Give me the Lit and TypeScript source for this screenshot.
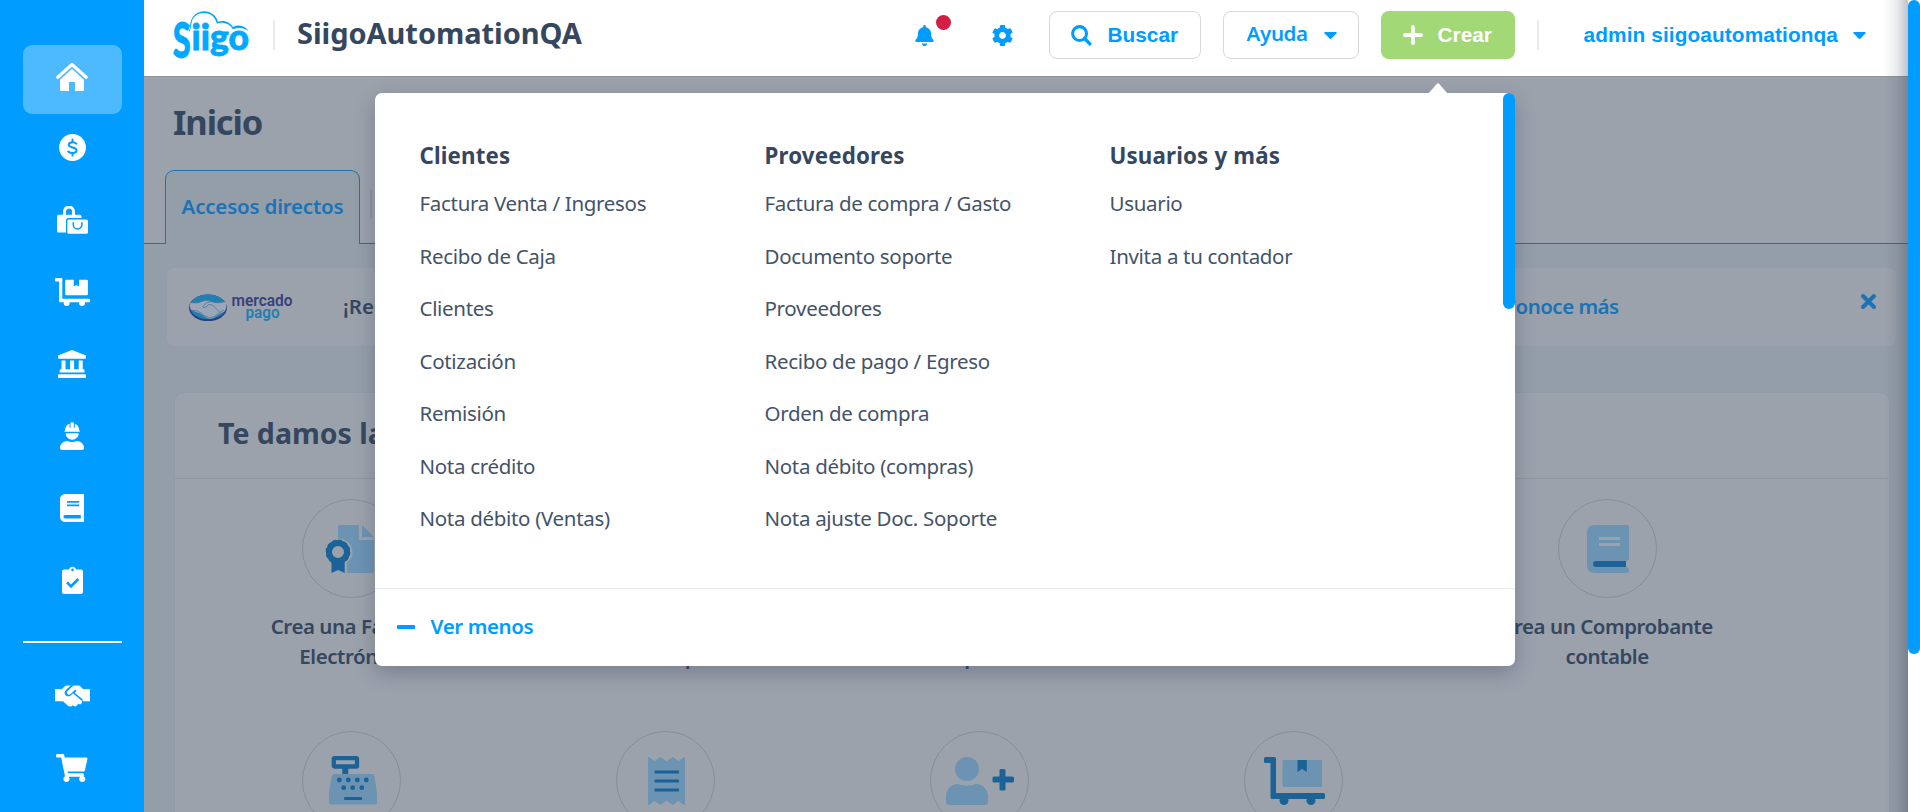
import { LitElement, html, svg, css, nothing, TemplateResult } from "lit";
import { customElement } from "lit/decorators.js";
import { classMap } from "lit/directives/class-map.js";

const BOOK_LINES = "M134 128h212q6 0 6 6v20q0 6-6 6H134q-6 0-6-6v-20q0-6 6-6zM134 192h212q6 0 6 6v20q0 6-6 6H134q-6 0-6-6v-20q0-6 6-6z";

const icons: Record<string, TemplateResult> = {
  home: html`<svg width="32" height="28" viewBox="0 0 32 28" fill="#fff">
    <path d="M16 5.800 28 16.800v9.700a1.500 1.500 0 0 1-1.500 1.500H19v-9h-6v9H5.500A1.500 1.500 0 0 1 4 26.500V16.800z" />
    <path d="M1.800 14.600 16 1.800l14.200 12.800" fill="none" stroke="#4db9ff" stroke-width="5" />
    <path d="M1.800 14.200 16 1.500l14.200 12.700" fill="none" stroke="#fff" stroke-width="3.300" stroke-linecap="round" stroke-linejoin="round" />
  </svg>`,
  dollar: html`<svg width="27" height="28" viewBox="0 0 27 28">
    <circle cx="13.500" cy="13.500" r="13.400" fill="#fff" />
    <path d="M17.300 9.600C16.300 8.500 15 8.200 13.500 8.200c-2.200 0-3.700 1-3.700 2.600 0 3.800 7.700 1.700 7.700 5.500 0 1.800-1.600 2.800-3.900 2.800-1.700 0-3.300-.5-4.300-1.600M13.500 5.500v2.600M13.500 19v2.500" fill="none" stroke="#009cff" stroke-width="2" stroke-linecap="round" />
  </svg>`,
  bags: html`<svg width="31" height="28" viewBox="0 0 31 28">
    <path d="M7.500 10V5.500a4.500 4.500 0 0 1 9 0V10" fill="none" stroke="#fff" stroke-width="3" />
    <path d="M1.500 8.700H23q1.500 0 1.500 1.500V12H11.500Q9 12 9 14.500V26.500H1.500Q0 26.500 0 25V10.200Q0 8.700 1.500 8.700z" fill="#fff" />
    <rect x="10.300" y="13.500" width="20.700" height="14.300" rx="1.500" fill="#fff" />
    <path d="M16.300 16.800v2a4.300 4.300 0 0 0 8.600 0v-2" fill="none" stroke="#009cff" stroke-width="1.500" stroke-linecap="round" />
  </svg>`,
  dolly: html`<svg width="35" height="28" viewBox="0 0 35 28" fill="#fff">
    <path d="M1 0h6.300v20.700H34q1 0 1 1v1.500q0 1-1 1H5q-1 0-1-1V3.500H1q-1 0-1-1V1q0-1 1-1z" />
    <path d="M11.200 1.800h7.600v6.700l2.600-1.500 2.600 1.500V1.800h7.700q1.200 0 1.200 1.200v13q0 1.200-1.200 1.200H11.200q-1 0-1-1.200V3q0-1.200 1-1.200z" />
    <circle cx="11.700" cy="25" r="3" /><circle cx="27" cy="25" r="3" />
  </svg>`,
  bank: html`<svg width="28" height="28" viewBox="0 0 28 28" fill="#fff">
    <path d="M14 0l13.400 5.200q.6.300.6 1V8q0 .8-.8.800H.8Q0 8.800 0 8V6.200q0-.7.600-1z" />
    <path d="M3.500 10.500h4v8.700h4.600v-8.700h4v8.700h4.600v-8.700h4v8.700h.8q1 0 1 1V22.500H1.700v-2.300q0-1 1-1h.8z" />
    <rect y="24.300" width="28" height="3.700" rx=".9" />
  </svg>`,
  worker: html`<svg width="24" height="28" viewBox="0 0 24 28" fill="#fff">
    <path d="M5 8.700Q5 3.500 9.500 1.700v4l1 .1V.6Q12 0 13.800.6v5.200l1-.1v-4Q19.300 3.500 19.300 8.700h.5V9.800H4.400V8.700z" />
    <path d="M5.600 11.200h13.200a6.600 6.600 0 0 1-13.200 0z" />
    <path d="M7.300 19c3 1.300 6.500 1.300 9.500 0 4.500.2 7.200 3.300 7.200 7q0 2-2 2H2q-2 0-2-2c0-3.700 2.800-6.800 7.300-7z" />
  </svg>`,
  book: html`<svg width="24.500" height="28" viewBox="0 0 448 512" fill="#fff">
    <path fill-rule="evenodd" d="M448 360V24c0-13.300-10.700-24-24-24H96C43 0 0 43 0 96v320c0 53 43 96 96 96h328c13.300 0 24-10.700 24-24v-16c0-7.500-3.500-14.300-8.900-18.700-4.200-15.400-4.200-59.300 0-74.700 5.400-4.300 8.900-11.100 8.900-18.600zM381.400 448H96c-17.700 0-32-14.300-32-32 0-17.600 14.400-32 32-32h285.400c-1.900 17.100-1.900 46.900 0 64z${BOOK_LINES}" />
  </svg>`,
  clipboard: html`<svg width="21" height="28" viewBox="0 0 21 28">
    <path d="M2 3.500h5a3.600 3.600 0 0 1 7 0h5q2 0 2 2V26q0 2-2 2H2q-2 0-2-2V5.500q0-2 2-2z" fill="#fff" />
    <circle cx="10.500" cy="3.900" r="1.300" fill="#009cff" />
    <path d="M5 16.300l4 4 7.300-7.300" fill="none" stroke="#009cff" stroke-width="2.600" />
  </svg>`,
  handshake: html`<svg width="35" height="28" viewBox="0 0 640 512" fill="#fff">
    <path d="M434.700 64h-85.900c-8 0-15.700 3-21.600 8.400l-98.300 90c-.1.100-.2.300-.3.400-16.600 15.600-16.300 40.500-2.100 56 12.700 13.900 39.400 17.600 56.100 2.700.1-.1.300-.1.400-.2l79.900-73.200c6.500-5.900 16.700-5.500 22.600 1 6 6.500 5.500 16.600-1 22.600l-26.100 23.900L504 313.800c2.900 2.400 5.500 5 7.900 7.700V128l-54.600-54.600c-5.900-6-14.100-9.400-22.600-9.400zM544 128.200v223.900h96V128.200h-96zM0 352h96V128.200H0V352zm128-224v223.900h18.300l90.500 81.900c27.400 22.300 67.700 18.100 90-9.300l.2-.2 17.900 15.500c15.900 13 39.400 10.500 52.300-5.400l31.400-38.600 5.400 4.400c13.700 11.100 33.900 9.100 45-4.700l9.500-11.700c11.200-13.800 9.100-33.900-4.600-45.100L327.400 207.600l-41.100 37.600c-26.900 24.700-68.600 22.900-93.300-4-24.700-27-22.800-68.700 4.100-93.400L288.900 64h-83.300c-8.500 0-16.600 3.400-22.600 9.400L128 128z" />
    <path d="M90 128h45v224H90zM505 128h45v224h-45z" />
  </svg>`,
  cart: html`<svg width="31.500" height="28" viewBox="0 0 576 512" fill="#fff">
    <path d="M528.120 301.319l47.273-208C578.806 78.301 567.391 64 551.990 64H159.208l-9.166-44.810C147.758 8.021 137.930 0 126.529 0H24C10.745 0 0 10.745 0 24v16c0 13.255 10.745 24 24 24h69.883l70.248 343.435C147.325 417.100 136 435.222 136 456c0 30.928 25.072 56 56 56s56-25.072 56-56c0-15.674-6.447-29.835-16.824-40h209.647C430.447 426.165 424 440.326 424 456c0 30.928 25.072 56 56 56s56-25.072 56-56c0-22.172-12.888-41.332-31.579-50.405l5.517-24.276c3.413-15.018-8.002-29.319-23.403-29.319H218.117l-6.545-32h293.145c11.206 0 20.920-7.754 23.403-18.681z" />
  </svg>`,
};

const L = "#6c93b2";
const D = "#1b6397";
const P = "#9ba2ac";

const tileIcons: Record<string, TemplateResult> = {
  certificate: html`<svg class="shift-left" width="48" height="48" viewBox="0 0 48 48">
    <path d="M13.500 0H32.800V13.500q0 1.500 1.500 1.500H48V46.500q0 1.500-1.500 1.500H21V37.500Q27 33 26.500 27 26 17 17 14.500L12 13.500V1.500Q12 0 13.500 0z" fill="${L}" />
    <path d="M36 0l12 12H36z" fill="${L}" />
    <path d="M5.500 34h13.200v14l-6.600-3-6.600 3z" fill="${D}" />
    <circle cx="12" cy="27" r="9" fill="none" stroke="${D}" stroke-width="6" />
    <circle cx="12" cy="27" r="11.500" fill="none" stroke="${D}" stroke-width="1.800" stroke-dasharray="3.500 2.520" />
  </svg>`,
  register: html`<svg width="48" height="49" viewBox="0 0 48 49">
    <path d="M13.300 10h6v10h-6z" fill="${D}" />
    <rect x="4.800" y="2.200" width="23.200" height="8.300" rx=".6" fill="none" stroke="${D}" stroke-width="4.300" stroke-linejoin="round" />
    <path d="M5.200 18H43q2 0 2.300 2L48 36.500V46.500q0 2-2 2H2q-2 0-2-2V36.500L2.900 20q.3-2 2.300-2z" fill="${L}" />
    <g fill="${D}">${[[10.300, 24], [19.300, 24], [28.300, 24], [37.300, 24], [14.700, 31.700], [23.700, 31.700], [32.800, 31.700]].map(([x, y]) => svg`<circle cx=${x} cy=${y} r="2.400" />`)}
    <rect x="15" y="41" width="18" height="3" rx=".8" /></g>
  </svg>`,
  receipt: html`<svg width="37" height="48" viewBox="0 0 37 48">
    <path d="M0 1q0-1.400 1.500-.8L6.500 4.300 12 0l6.500 4.300L25 0l5.500 4.300L35.500.2Q37-.4 37 1V47q0 1.400-1.500.8L30.500 43.700 25 48l-6.500-4.300L12 48l-5.500-4.300L1.500 47.800Q0 48.400 0 47z" fill="${L}" />
    <g fill="${D}"><rect x="6.500" y="13.500" width="24.500" height="3" rx=".7" /><rect x="6.500" y="22.500" width="24.500" height="3" rx=".7" /><rect x="6.500" y="31.500" width="24.500" height="3" rx=".7" /></g>
  </svg>`,
  person: html`<svg width="68" height="48" viewBox="0 0 68 48">
    <circle cx="21" cy="12" r="12" fill="${L}" />
    <path d="M12.500 27c5.500 2.200 11.500 2.200 17 0C37 27 42 32.500 42 39.500V45q0 3-3 3H3q-3 0-3-3v-5.500C0 32.500 5 27 12.500 27z" fill="${L}" />
    <path d="M55 12h3q1.500 0 1.500 1.500v6h7q1.500 0 1.500 1.500v3q0 1.500-1.500 1.500h-7v6.500q0 1.500-1.500 1.500h-3q-1.500 0-1.500-1.500V25.500H48q-1.500 0-1.500-1.500v-3q0-1.500 1.500-1.500h5.500v-6q0-1.500 1.500-1.500z" fill="${D}" />
  </svg>`,
  dolly: html`<svg width="61" height="48" viewBox="0 0 61 48">
    <path d="M1.500 0h9Q12 0 12 1.500V36h47.500q1.500 0 1.500 1.500v3q0 1.500-1.500 1.500H8q-1.500 0-1.500-1.500V6h-5Q0 6 0 4.500v-3Q0 0 1.500 0z" fill="${D}" />
    <circle cx="20" cy="43.500" r="4.500" fill="${D}" /><circle cx="47" cy="43.500" r="4.500" fill="${D}" />
    <rect x="18.500" y="3" width="39.500" height="27" rx="1.500" fill="${L}" />
    <path d="M33.500 3h9.300v12l-4.650-3-4.650 3z" fill="${D}" />
  </svg>`,
  ledger: html`<svg width="42" height="48" viewBox="0 0 42 48">
    <path d="M8 0h31.500Q42 0 42 2.500V33q0 2.500-3 3v6q3 .5 3 3 0 3-2.500 3H8q-8 0-8-8V8Q0 0 8 0z" fill="${L}" />
    <path d="M12 12h21v3H12zM12 18h21v3H12z" fill="${P}" />
    <path d="M9 36h30v6H9a3 3 0 0 1 0-6z" fill="${D}" />
  </svg>`,
};

const nav = ["home", "dollar", "bags", "dolly", "bank", "worker", "book", "clipboard"];
const navExtra = ["handshake", "cart"];

const menu = [
  { title: "Clientes", items: ["Factura Venta / Ingresos", "Recibo de Caja", "Clientes", "Cotización", "Remisión", "Nota crédito", "Nota débito (Ventas)"] },
  { title: "Proveedores", items: ["Factura de compra / Gasto", "Documento soporte", "Proveedores", "Recibo de pago / Egreso", "Orden de compra", "Nota débito (compras)", "Nota ajuste Doc. Soporte"] },
  { title: "Usuarios y más", items: ["Usuario", "Invita a tu contador"] },
];

const tiles: { icon: string; lines: string[] }[] = [
  { icon: "certificate", lines: ["Crea una Factura", "Electrónica"] },
  { icon: "receipt", lines: ["Crea una Factura", "de compra"] },
  { icon: "receipt", lines: ["Crea un Documento", "soporte"] },
  { icon: "receipt", lines: ["Crea una", "Cotización"] },
  { icon: "ledger", lines: ["Crea un Comprobante", "contable"] },
  { icon: "register", lines: [] },
  { icon: "receipt", lines: [] },
  { icon: "person", lines: [] },
  { icon: "dolly", lines: [] },
];

@customElement("side-nav")
class SideNav extends LitElement {
  static styles = css`
    :host { display: flex; flex-direction: column; align-items: center; box-sizing: border-box; width: 144px; height: 812px; padding-top: 45px; background: #009cff; flex: none; overflow: hidden; }
    .item { display: flex; align-items: center; justify-content: center; box-sizing: border-box; width: 99px; height: 72px; flex: none; }
    .active { height: 69px; margin-bottom: -2px; padding-bottom: 5px; border-radius: 9px; background: #4db9ff; }
    .rule { width: 99px; height: 2px; margin: 25px 0 17px; background: #fff; flex: none; }
    svg { display: block; }
  `;
  render() {
    return html`
      ${nav.map((n, i) => html`<div class=${classMap({ item: true, active: i === 0 })}>${icons[n]}</div>`)}
      <div class="rule"></div>
      ${navExtra.map((n) => html`<div class="item">${icons[n]}</div>`)}
    `;
  }
}

@customElement("top-bar")
class TopBar extends LitElement {
  static styles = css`
    :host { display: flex; align-items: center; box-sizing: border-box; height: 76px; padding: 0 42px 6px 28px; background: #fff; color: #009cff; font: 600 20.5px/30px "Noto Sans", sans-serif; flex: none; }
    svg { display: block; flex: none; overflow: visible; }
    .rule { width: 2px; height: 30px; background: #e9eaec; }
    .company { margin: 0 auto 0 22px; padding-bottom: 5px; color: #35475e; font-size: 29px; font-weight: 700; line-height: 40px; letter-spacing: -0.050px; }
    .logo { margin: 0 24px 0 0; }
    .bell { position: relative; width: 20px; margin-right: 57px; }
    .dot { position: absolute; left: 21px; top: -10px; width: 15px; height: 15px; border-radius: 50%; background: #d41f43; }
    .btn { display: flex; align-items: center; box-sizing: border-box; height: 48px; border: 1px solid #d6d8dc; border-radius: 8px; }
    .arial { font-family: "Liberation Sans", Arial, sans-serif; font-weight: 700; font-size: 20.800px; letter-spacing: 0; }
    .search { width: 152px; margin: 0 22px 0 36px; padding-left: 21px; gap: 16px; }
    .help { width: 136px; margin-right: 22px; padding-left: 23px; gap: 16px; letter-spacing: -0.350px; }
    .help span { padding-bottom: 4px; }
    .create { width: 134px; margin-right: 22px; padding-left: 22px; gap: 15px; border: 0; background: #a2d876; color: #fff; }
    .user { display: flex; align-items: center; gap: 15px; margin-left: 45px; }
    .user span { letter-spacing: 0.110px; }
  `;
  render() {
    const caret = html`<svg width="13" height="7" viewBox="0 0 13 7"><path d="M1 0h11q1.200.3.500 1.300L7.500 6.500q-1 .9-2 0L.5 1.300Q-.2.300 1 0z" fill="#009cff" /></svg>`;
    return html`
      <svg class="logo" width="77" height="52" viewBox="172 9 77 52">
        <path d="M186.500 24l3 6q.3-5 1.200-8.500C193 15 198 11.300 204 11.300c7 0 12.300 4.200 14 10.400 5-1.500 11-.7 15 5.300 6-3 12.500-1 16 4.500-4-3.300-9.500-4.500-16-2.300-4-6-9.500-7.500-16.200-5.700-1.500-6.500-6.500-10.500-12.800-10.500-6 0-10.500 3.500-12 8-1 3.500-1 7-2.500 11z" fill="#00a9ff" />
        <text x="172.800" y="58.200" font-family="Lato, sans-serif" font-weight="900" font-size="49" fill="#00a9ff" stroke="#00a9ff" stroke-width=".8" textLength="18" lengthAdjust="spacingAndGlyphs">S</text>
        <text x="191.500" y="50.300" font-family="Lato, sans-serif" font-weight="900" font-size="35.500" fill="#00a9ff" stroke="#00a9ff" stroke-width=".8" textLength="57.500" lengthAdjust="spacingAndGlyphs">iigo</text>
      </svg>
      <div class="rule"></div>
      <div class="company">SiigoAutomationQA</div>
      <div class="bell">
        <svg width="19" height="21" viewBox="0 0 448 512"><path fill="#009cff" d="M224 512c35.320 0 63.970-28.650 63.970-64H160.030c0 35.350 28.650 64 63.970 64zm215.390-149.710c-19.320-20.760-55.470-51.990-55.470-154.290 0-77.700-54.480-139.900-127.940-155.160V32c0-17.670-14.320-32-31.980-32s-31.980 14.330-31.980 32v20.840C118.560 68.100 64.080 130.300 64.080 208c0 102.300-36.150 133.530-55.470 154.290-6 6.450-8.660 14.160-8.610 21.710.11 16.400 12.980 32 32.100 32h383.800c19.120 0 32-15.600 32.100-32 .05-7.550-2.610-15.270-8.610-21.710z" /></svg>
        <div class="dot"></div>
      </div>
      <svg width="21" height="21" viewBox="8 8 496 496"><path fill="#009cff" d="M487.400 315.700l-42.600-24.600c4.300-23.200 4.300-47 0-70.200l42.600-24.600c4.900-2.800 7.100-8.600 5.500-14-11.100-35.600-30-67.800-54.700-94.600-3.800-4.100-10-5.100-14.800-2.300L380.800 110c-17.900-15.400-38.500-27.300-60.800-35.100V25.800c0-5.600-3.900-10.500-9.400-11.700-36.700-8.200-74.300-7.800-109.200 0-5.500 1.200-9.400 6.100-9.400 11.700V75c-22.200 7.900-42.800 19.800-60.800 35.100L88.700 85.500c-4.900-2.800-11-1.900-14.800 2.300-24.700 26.700-43.600 58.900-54.700 94.600-1.700 5.400.6 11.200 5.500 14L67.300 221c-4.300 23.200-4.300 47 0 70.200l-42.600 24.600c-4.900 2.800-7.100 8.600-5.500 14 11.100 35.600 30 67.800 54.700 94.600 3.800 4.100 10 5.100 14.800 2.300l42.600-24.600c17.900 15.400 38.500 27.300 60.800 35.100v49.200c0 5.600 3.900 10.500 9.400 11.700 36.700 8.200 74.300 7.800 109.200 0 5.500-1.200 9.400-6.100 9.400-11.700v-49.200c22.200-7.900 42.800-19.800 60.800-35.100l42.600 24.600c4.900 2.800 11 1.900 14.800-2.300 24.700-26.700 43.600-58.900 54.700-94.600 1.500-5.500-.7-11.300-5.600-14.100zM256 336c-44.100 0-80-35.900-80-80s35.900-80 80-80 80 35.900 80 80-35.900 80-80 80z" /></svg>
      <div class="btn arial search">
        <svg width="21" height="21" viewBox="0 0 22 22"><circle cx="9" cy="9" r="7.300" fill="none" stroke="#009cff" stroke-width="3.200" /><path d="M14.200 14.200l5.600 5.600" stroke="#009cff" stroke-width="3.600" stroke-linecap="round" /></svg>
        <span>Buscar</span>
      </div>
      <div class="btn help"><span>Ayuda</span>${caret}</div>
      <div class="btn arial create">
        <svg width="20" height="20" viewBox="0 0 20 20"><path d="M10 1.900v16.200M1.900 10h16.200" stroke="#fff" stroke-width="3.800" stroke-linecap="round" /></svg>
        <span>Crear</span>
      </div>
      <div class="rule"></div>
      <div class="user arial"><span>admin siigoautomationqa</span>${caret}</div>
    `;
  }
}

@customElement("create-menu")
class CreateMenu extends LitElement {
  static styles = css`
    :host { display: block; position: absolute; left: 231px; top: 93px; width: 1140px; height: 573px; border-radius: 7px; background: #fff; box-shadow: 0 7px 20px rgba(40, 50, 75, 0.3); color: #435369; font: 400 20.500px/30px "Noto Sans", sans-serif; letter-spacing: -0.310px; }
    .arrow { position: absolute; left: 1053px; top: -10px; display: block; }
    .bar { position: absolute; right: 0; top: 0; width: 12px; height: 216px; border-radius: 6px; background: #009cff; }
    .cols { display: grid; grid-template-columns: repeat(3, 345px); box-sizing: border-box; height: 496px; padding: 48px 0 0 44.500px; border-bottom: 1px solid #e8eaed; }
    .title { height: 47px; color: #35475e; font-size: 22.300px; font-weight: 700; letter-spacing: 0.160px; }
    .entry { height: 52.500px; }
    .footer { display: flex; align-items: center; box-sizing: border-box; height: 76px; padding: 0 0 2px 22px; gap: 15.500px; color: #009cff; font-weight: 600; letter-spacing: -0.400px; }
    .minus { width: 18px; height: 4px; margin-top: 1px; border-radius: 1px; background: #009cff; }
  `;
  render() {
    return html`
      <svg class="arrow" width="20" height="11" viewBox="0 0 20 11"><path d="M0 11 L9 .8q1-1 2 0L20 11z" fill="#fff" /></svg>
      <div class="bar"></div>
      <div class="cols">
        ${menu.map((c) => html`<div>
          <div class="title">${c.title}</div>
          ${c.items.map((t) => html`<div class="entry">${t}</div>`)}
        </div>`)}
      </div>
      <div class="footer"><div class="minus"></div><span>Ver menos</span></div>
    `;
  }
}

@customElement("app-root")
class AppRoot extends LitElement {
  static styles = css`
    :host { display: flex; width: 1920px; height: 812px; overflow: hidden; background: #fff; font: 600 20.500px/30px "Noto Sans", sans-serif; color: #35475e; }
    .main { position: relative; display: flex; flex-direction: column; width: 1764px; height: 812px; overflow: hidden; background: #949ea8; }
    .scroll { width: 12px; flex: none; }
    .thumb { height: 654px; border-radius: 6px; background: #009cff; }
    .edge { position: absolute; right: 0; top: 0; width: 24px; height: 812px; background: linear-gradient(to left, rgba(60, 68, 85, 0.32), rgba(60, 68, 85, 0.110) 45%, rgba(60, 68, 85, 0)); }
    .head { display: flex; flex-direction: column; height: 168px; flex: none; background: #9ba2ac; box-shadow: inset 0 1px 0 #8e959f; }
    .h1 { height: 94px; box-sizing: border-box; padding: 22px 0 0 29px; font-size: 34.500px; line-height: 48px; font-weight: 700; letter-spacing: -1.100px; }
    .tabs { display: flex; height: 74px; }
    .lead { width: 21px; border-bottom: 1px solid #1b72b4; box-sizing: border-box; }
    .tab { width: 195px; height: 74px; box-sizing: border-box; border: 1px solid #1b72b4; border-bottom: 0; border-radius: 9px 9px 0 0; background: #949ea8; color: #1b72b4; text-align: center; line-height: 71px; letter-spacing: -0.200px; }
    .rest { flex: 1; border-bottom: 1px solid #1b72b4; padding: 19px 0 0 10px; }
    .sep { width: 2px; height: 30px; background: #8f969f; }
    .banner { display: flex; align-items: center; box-sizing: border-box; width: 1729px; height: 78px; margin: 24px 0 0 23px; padding: 0 20px 0 22px; border-radius: 7px; background: #9ba2ac; flex: none; }
    .msg { margin: 0 0 3px 50px; flex: 1; letter-spacing: 0; }
    .more { width: 358px; color: #1b72b4; letter-spacing: -0.520px; padding-bottom: 3px; }
    .close { margin-top: -12px; }
    .card { width: 1716px; height: 600px; margin: 46px 0 0 30px; box-sizing: border-box; border: 1px solid #929aa4; border-radius: 10px; background: #9ba2ac; flex: none; }
    .cardtitle { height: 86px; box-sizing: border-box; border-bottom: 1px solid #8f969f; padding: 19px 0 0 43px; font-size: 28.500px; line-height: 42px; font-weight: 700; }
    .grid { display: grid; grid-template-columns: repeat(5, 313.800px); padding: 20px 0 0 20px; row-gap: 32px; }
    .tile { display: flex; flex-direction: column; align-items: center; height: 200px; letter-spacing: -0.450px; }
    .circle { display: flex; align-items: center; justify-content: center; box-sizing: border-box; width: 99px; height: 99px; margin-bottom: 13px; padding-left: 2px; border: 1px solid #878e98; border-radius: 50%; }
    .shift-left { margin-left: -6px; }
    svg { display: block; flex: none; overflow: visible; }
  `;
  render() {
    return html`
      <side-nav></side-nav>
      <div class="main">
        <top-bar></top-bar>
        <div class="head">
          <div class="h1">Inicio</div>
          <div class="tabs"><div class="lead"></div><div class="tab">Accesos directos</div><div class="rest"><div class="sep"></div></div></div>
        </div>
        <div class="banner">
          <svg width="104" height="30" viewBox="189 291 104 30">
            <ellipse cx="208" cy="306.800" rx="19" ry="13.300" fill="#2b3f7e" />
            <ellipse cx="208" cy="305.700" rx="18" ry="12.300" fill="#217fb3" />
            <path d="M190.500 301.500q7 1.500 11-1 6-2.500 10 .2 7 2.500 14-.2 2.300 6-1 10-7 3-9.500 5.500-5 3.500-9 .3l-6-4q-7-2-9.300-4-1.800-3.500-.2-6.800z" fill="#9ba7b6" />
            <path d="M190.500 301.500q7 1.500 11-1 6-2.500 10 .2 7 2.500 14-.2M211 300.500q-5 0-8.500 5.500 2.500 2 6-2.500l4 .5 8 8M192 309q6 .5 10 3.500 2 3 5 3 2.500 2.500 5.500.5 3 0 4-2.500 3-1 3.500-2.500l4-2" fill="none" stroke="#52759c" stroke-width=".8" />
            <text x="231.500" y="304.700" font-family="Roboto, sans-serif" font-weight="600" font-size="16" fill="#37417c" textLength="61" lengthAdjust="spacingAndGlyphs">mercado</text>
            <text x="245.500" y="316.700" font-family="Roboto, sans-serif" font-weight="600" font-size="16" fill="#217fb3" textLength="34" lengthAdjust="spacingAndGlyphs">pago</text>
          </svg>
          <div class="msg">¡Recibe pagos en línea!</div>
          <div class="more">Conoce más</div>
          <svg class="close" width="15" height="15" viewBox="0 0 15 15"><path d="M2 2l11 11M13 2L2 13" stroke="#1b72b4" stroke-width="4" stroke-linecap="round" /></svg>
        </div>
        <div class="card">
          <div class="cardtitle">Te damos la bienvenida</div>
          <div class="grid">
            ${tiles.map((t) => html`<div class="tile"><div class="circle">${tileIcons[t.icon]}</div>${t.lines.length ? t.lines.map((l) => html`<div>${l}</div>`) : nothing}</div>`)}
          </div>
        </div>
        <create-menu></create-menu>
        <div class="edge"></div>
      </div>
      <div class="scroll"><div class="thumb"></div></div>
    `;
  }
}
